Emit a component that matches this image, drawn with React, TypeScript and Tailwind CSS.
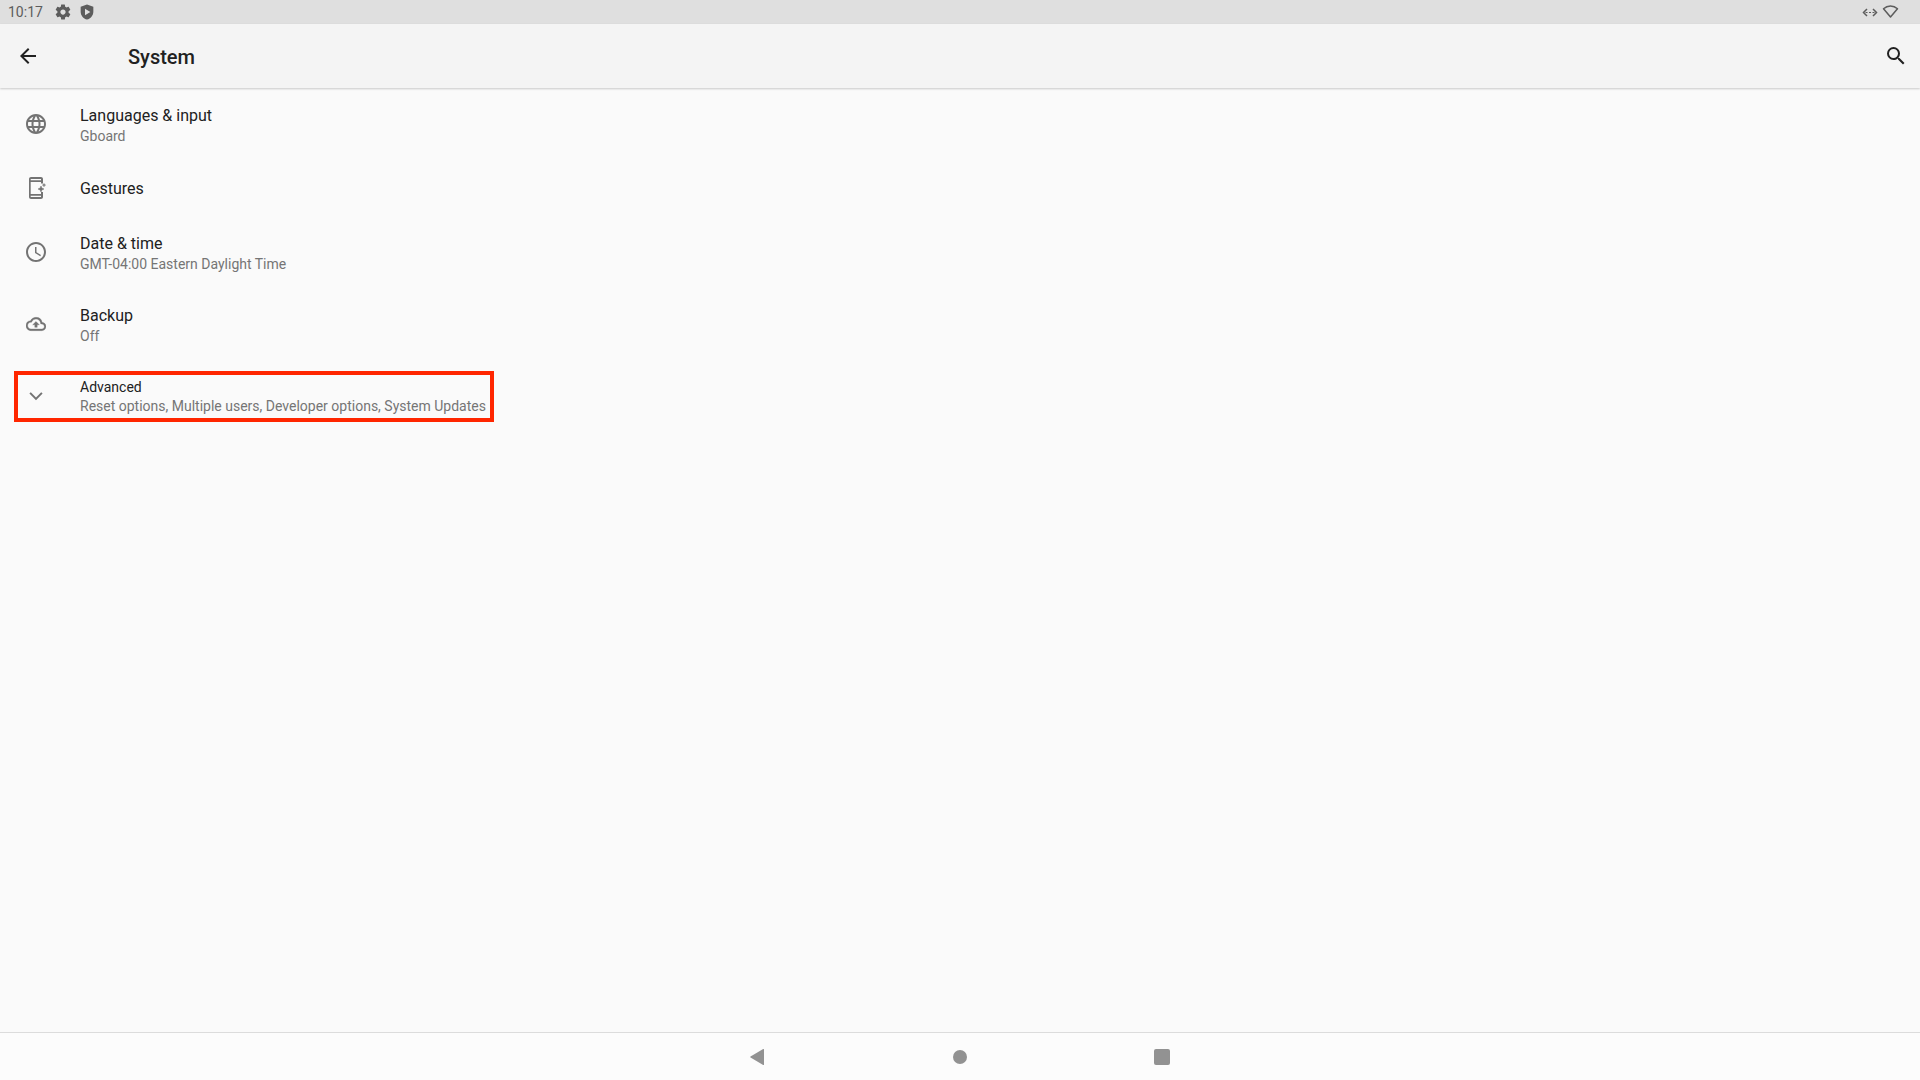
import type { ReactNode } from "react";

function Icon({ children, className = "size-6" }: { children: ReactNode; className?: string }) {
  return (
    <svg viewBox="0 0 24 24" fill="currentColor" aria-hidden="true" className={`${className} shrink-0`}>
      {children}
    </svg>
  );
}

function GlobeIcon() {
  return (
    <Icon>
      <path d="M11.99 2C6.47 2 2 6.48 2 12s4.47 10 9.99 10C17.52 22 22 17.52 22 12S17.52 2 11.99 2zm6.93 6h-2.95a15.65 15.65 0 0 0-1.38-3.56A8.03 8.03 0 0 1 18.92 8zM12 4.04c.83 1.2 1.48 2.53 1.91 3.96h-3.82c.43-1.43 1.08-2.76 1.91-3.96zM4.26 14C4.1 13.36 4 12.69 4 12s.1-1.36.26-2h3.38c-.08.66-.14 1.32-.14 2s.06 1.34.14 2H4.26zm.82 2h2.95c.32 1.25.78 2.45 1.38 3.56A7.99 7.99 0 0 1 5.08 16zm2.95-8H5.08a7.99 7.99 0 0 1 4.33-3.56A15.65 15.65 0 0 0 8.03 8zM12 19.96c-.83-1.2-1.48-2.53-1.91-3.96h3.82c-.43 1.43-1.08 2.76-1.91 3.96zM14.34 14H9.66c-.09-.66-.16-1.32-.16-2s.07-1.35.16-2h4.68c.09.65.16 1.32.16 2s-.07 1.34-.16 2zm.25 5.56c.6-1.11 1.06-2.31 1.38-3.56h2.95a8.03 8.03 0 0 1-4.33 3.56zM16.36 14c.08-.66.14-1.32.14-2s-.06-1.34-.14-2h3.38c.16.64.26 1.31.26 2s-.1 1.36-.26 2h-3.38z" />
    </Icon>
  );
}

function GesturesIcon() {
  return (
    <Icon>
      <path d="M17 18H6.700V6H17v1.500h2V3c0-1.100-.9-2-2-2H7c-1.100 0-2 .9-2 2v18c0 1.100.9 2 2 2h10c1.100 0 2-.9 2-2v-5h-2v2zM6.700 3H17v1.200H6.700V3zM17 21H6.700v-1.200H17V21z" />
      <path d="M17 10l.9 2.100 2.100.9-2.100.9L17 16l-.9-2.100-2.100-.9 2.100-.9z" stroke="currentColor" strokeWidth=".5" />
      <path d="M20 7.500l.5 1.100 1.100.5-1.100.5-.5 1.100-.5-1.100-1.100-.5 1.100-.5z" stroke="currentColor" strokeWidth=".5" />
    </Icon>
  );
}

function ClockIcon() {
  return (
    <Icon>
      <path d="M11.990 2C6.470 2 2 6.480 2 12s4.470 10 9.990 10C17.520 22 22 17.520 22 12S17.520 2 11.990 2zM12 20c-4.420 0-8-3.580-8-8s3.580-8 8-8 8 3.580 8 8-3.580 8-8 8zM12.500 7H11v6l5.250 3.150.75-1.230-4.500-2.670z" />
    </Icon>
  );
}

function BackupIcon() {
  return (
    <Icon className="m-0.5 size-5">
      <path d="M19.350 10.040A7.490 7.490 0 0 0 12 4C9.110 4 6.600 5.640 5.350 8.040A5.994 5.994 0 0 0 0 14c0 3.310 2.690 6 6 6h13c2.760 0 5-2.240 5-5 0-2.640-2.050-4.780-4.650-4.960zM19 18H6c-2.210 0-4-1.790-4-4 0-2.050 1.530-3.760 3.560-3.970l1.070-.11.5-.95A5.469 5.469 0 0 1 12 6c2.620 0 4.880 1.860 5.390 4.430l.3 1.500 1.530.11A2.980 2.980 0 0 1 22 15c0 1.650-1.350 3-3 3zM8 13h2.550v3h2.900v-3H16l-4-4z" stroke="currentColor" strokeWidth=".4" />
    </Icon>
  );
}

function ChevronDownIcon() {
  return (
    <Icon>
      <path d="M17.200 8.200 12 13.400 6.800 8.200 5.400 9.600 12 16.200l6.600-6.600z" />
    </Icon>
  );
}

type Setting = { title: string; summary?: string; icon: ReactNode };

const settings: Setting[] = [
  { title: "Languages & input", summary: "Gboard", icon: <GlobeIcon /> },
  { title: "Gestures", icon: <GesturesIcon /> },
  { title: "Date & time", summary: "GMT-04:00 Eastern Daylight Time", icon: <ClockIcon /> },
  { title: "Backup", summary: "Off", icon: <BackupIcon /> },
];

function StatusBar() {
  return (
    <div className="flex h-6 items-center bg-[#dfdfdf] pl-2 pr-5 text-[#5c5c5c]">
      <time className="w-[46px] text-sm leading-6">10:17</time>
      <Icon className="size-[18px]">
        <path d="M19.430 12.980c.04-.32.07-.64.07-.98s-.03-.66-.07-.98l2.110-1.650c.19-.15.24-.42.12-.64l-2-3.460c-.12-.22-.39-.3-.61-.22l-2.490 1c-.52-.4-1.080-.73-1.690-.98l-.38-2.650A.488.488 0 0 0 14 2h-4c-.25 0-.46.18-.49.42l-.38 2.650c-.61.25-1.170.59-1.690.98l-2.490-1c-.23-.09-.49 0-.61.22l-2 3.460c-.13.22-.07.49.12.64l2.110 1.650c-.04.32-.07.65-.07.98s.03.66.07.98l-2.110 1.650c-.19.15-.24.42-.12.64l2 3.460c.12.22.39.3.61.22l2.490-1c.52.4 1.080.73 1.690.98l.38 2.650c.03.24.24.42.49.42h4c.25 0 .46-.18.49-.42l.38-2.650c.61-.25 1.170-.59 1.690-.98l2.490 1c.23.09.49 0 .61-.22l2-3.460c.12-.22.07-.49-.12-.64l-2.110-1.650zM12 15.500c-1.930 0-3.500-1.570-3.500-3.500s1.570-3.500 3.500-3.500 3.500 1.570 3.500 3.500-1.570 3.500-3.500 3.500z" />
      </Icon>
      <Icon className="ml-[7px] size-4">
        <path fillRule="evenodd" d="M12 .8 2.500 4.300v7.200c0 5.500 4 10.400 9.500 11.900 5.500-1.500 9.500-6.400 9.500-11.900V4.300L12 .8zM9 7l8 5-8 5V7z" />
      </Icon>
      <div className="ml-auto flex items-center gap-1">
        <svg viewBox="0 0 16 16" className="size-4" fill="none" stroke="currentColor" strokeWidth="1.5" aria-hidden="true">
          <path d="M5 5 1.500 8.500 5 12M11 5 14.500 8.500 11 12" />
          <path d="M3.500 8.500h2M7 8.500h2M10.500 8.500h2" strokeWidth="1.2" />
        </svg>
        <svg viewBox="0 0 18 18" className="size-[18px]" fill="none" stroke="currentColor" strokeWidth="1.500" strokeLinejoin="round" aria-hidden="true">
          <path d="M1.500 5.800C5.500 2 11.500 2 15.500 5.800L8.500 14z" />
        </svg>
      </div>
    </div>
  );
}

function NavBar() {
  return (
    <nav className="flex h-12 items-center justify-center gap-[162px] border-t border-[#dcdcdc] bg-[#fcfcfc] text-[#929292]">
      <button type="button" aria-label="Back" className="flex size-10 items-center justify-center">
        <svg viewBox="0 0 20 20" className="size-5" fill="currentColor" aria-hidden="true">
          <path d="M16 2.600v14.800q0 .8-.8.5L2.500 10.600q-.7-.6 0-1.200L15.200 2.100q.8-.3.800.5z" />
        </svg>
      </button>
      <button type="button" aria-label="Home" className="flex size-10 items-center justify-center">
        <span className="size-3.5 rounded-full bg-current" />
      </button>
      <button type="button" aria-label="Recent apps" className="flex size-10 items-center justify-center">
        <span className="size-4 rounded-xs bg-current" />
      </button>
    </nav>
  );
}

export default function App() {
  return (
    <div className="flex min-h-screen flex-col bg-[#fafafa] font-['Roboto',sans-serif] text-[#212121]">
      <StatusBar />
      <header className="flex h-16 items-center bg-[#f4f4f4] pl-4 pr-3 shadow-[0_1px_2px_rgba(0,0,0,0.2)]">
        <button type="button" aria-label="Navigate up">
          <Icon>
            <path d="M20 11H7.830l5.590-5.590L12 4l-8 8 8 8 1.410-1.410L7.830 13H20z" />
          </Icon>
        </button>
        <h1 className="ml-22 pt-0.5 text-xl font-medium">System</h1>
        <button type="button" aria-label="Search settings" className="ml-auto">
          <Icon>
            <path d="M15.500 14h-.79l-.28-.27A6.471 6.471 0 0 0 16 9.500 6.500 6.500 0 1 0 9.500 16c1.610 0 3.090-.59 4.230-1.570l.27.28v.79l5 4.990L20.490 19l-4.990-5zm-6 0C7.010 14 5 11.990 5 9.500S7.010 5 9.500 5 14 7.010 14 9.500 11.990 14 9.500 14z" />
          </Icon>
        </button>
      </header>
      <main className="grow">
        <ul>
          {settings.map(({ title, summary, icon }) => (
            <li key={title}>
              <button
                type="button"
                className={`flex w-full items-center gap-8 px-6 text-left ${summary ? "h-18" : "h-14"}`}
              >
                <span className="text-[#737373]">{icon}</span>
                <span className={`flex flex-col ${summary ? "pt-1" : "pt-0.5"}`}>
                  <span className="text-base leading-5">{title}</span>
                  {summary && <span className="text-sm leading-5 text-[#757575]">{summary}</span>}
                </span>
              </button>
            </li>
          ))}
          <li className="flex h-18 items-center px-3.5">
            <button
              type="button"
              aria-expanded="false"
              className="flex items-center gap-8 border-4 border-[#ff2600] py-0.5 pl-1.5 pr-1 text-left"
            >
              <span className="text-[#737373]">
                <ChevronDownIcon />
              </span>
              <span className="flex flex-col">
                <span className="text-sm leading-5">Advanced</span>
                <span className="text-sm leading-[19px] text-[#757575]">
                  Reset options, Multiple users, Developer options, System Updates
                </span>
              </span>
            </button>
          </li>
        </ul>
      </main>
      <NavBar />
    </div>
  );
}
